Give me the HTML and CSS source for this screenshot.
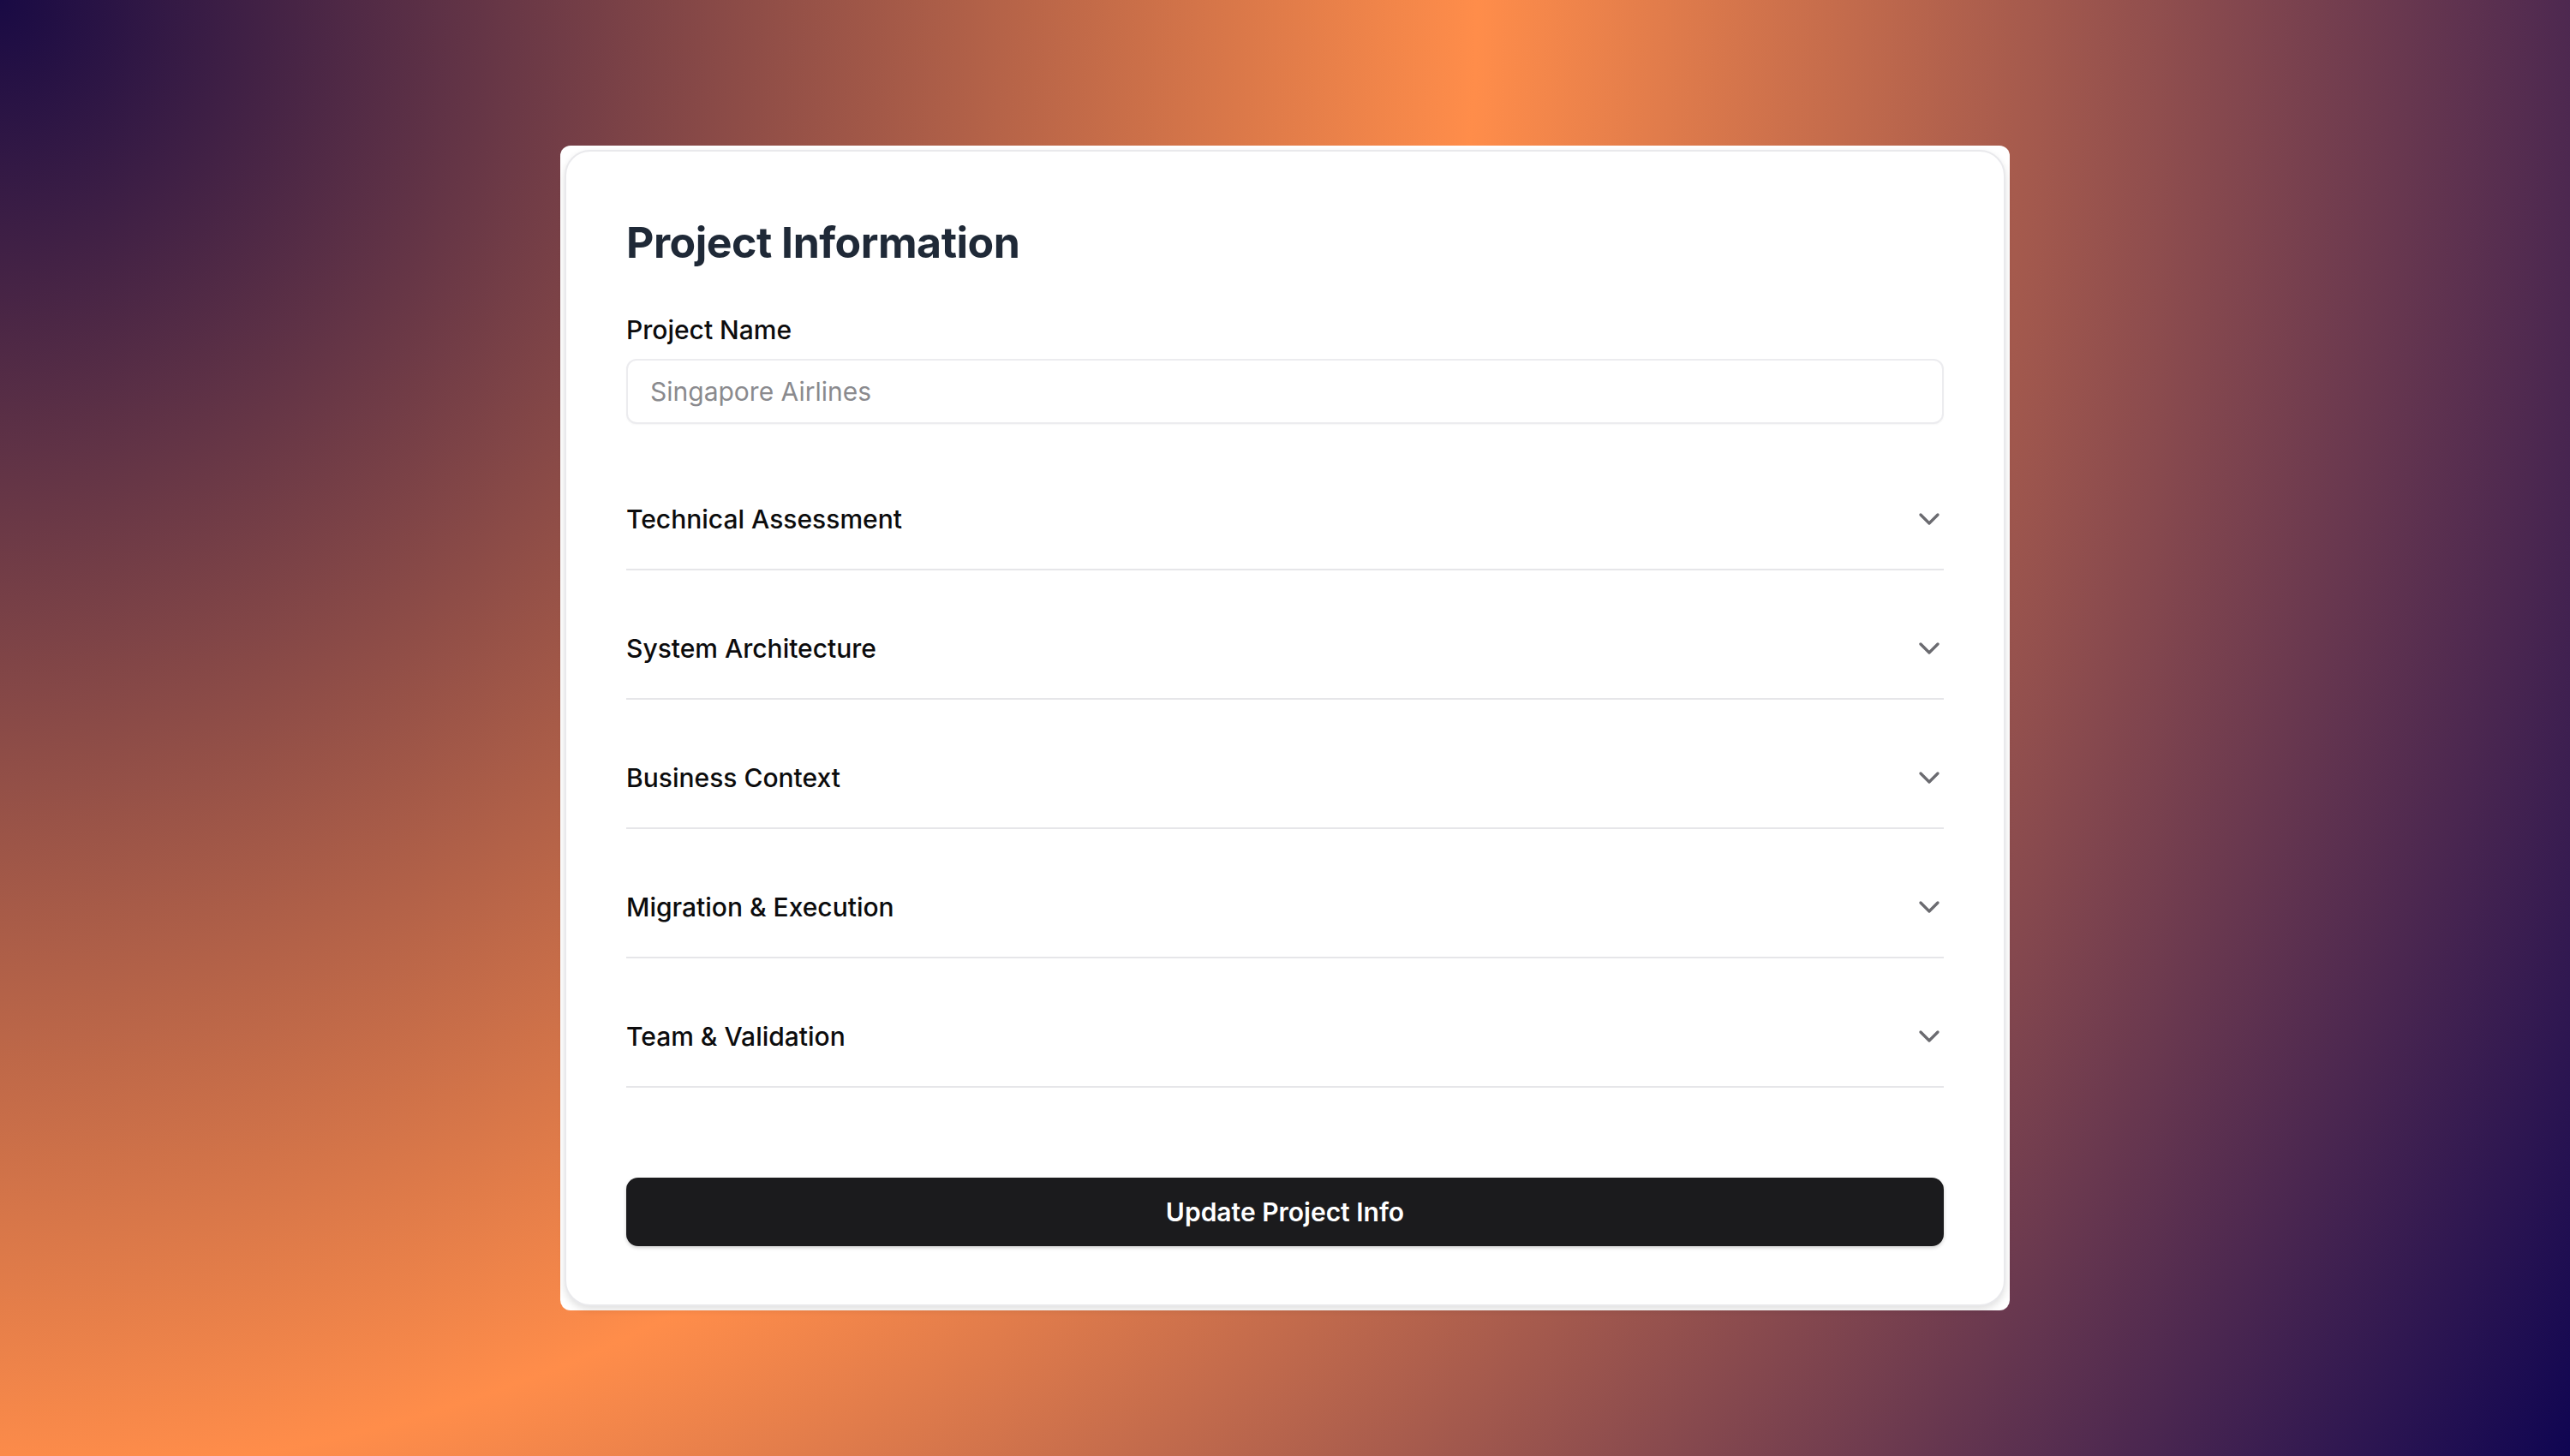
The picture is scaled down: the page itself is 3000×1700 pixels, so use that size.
FILE: index.html
```html
<!DOCTYPE html>
<html lang="en">
<head>
<meta charset="utf-8">
<title>Project Information</title>
<link rel="stylesheet" href="styles.css">
</head>
<body>
<main class="page">
  <div class="frame">
    <section class="card">
      <h1 class="title">Project Information</h1>
      <form class="form">
        <label class="label" for="pname">Project Name</label>
        <input class="input" id="pname" type="text" placeholder="Singapore Airlines">
        <div class="accordion">
          <div class="item"><span class="item-title">Technical Assessment</span><svg class="chev" viewBox="0 0 24 24"><path d="m6 9 6 6 6-6"/></svg></div>
          <div class="item"><span class="item-title">System Architecture</span><svg class="chev" viewBox="0 0 24 24"><path d="m6 9 6 6 6-6"/></svg></div>
          <div class="item"><span class="item-title">Business Context</span><svg class="chev" viewBox="0 0 24 24"><path d="m6 9 6 6 6-6"/></svg></div>
          <div class="item"><span class="item-title">Migration &amp; Execution</span><svg class="chev" viewBox="0 0 24 24"><path d="m6 9 6 6 6-6"/></svg></div>
          <div class="item"><span class="item-title">Team &amp; Validation</span><svg class="chev" viewBox="0 0 24 24"><path d="m6 9 6 6 6-6"/></svg></div>
        </div>
        <button class="button" type="button">Update Project Info</button>
      </form>
    </section>
  </div>
</main>
</body>
</html>
```
FILE: styles.css
```css
* { box-sizing: border-box; }
html, body { margin: 0; padding: 0; }
body {
  width: 3000px;
  height: 1700px;
  font-family: Inter, "Noto Sans", "Liberation Sans", sans-serif;
  background: radial-gradient(circle at top left, #190a44 0%, #ff8d4a 50%, #0f0552 100%);
}
.page {
  width: 3000px;
  height: 1700px;
  display: flex;
  align-items: center;
  justify-content: center;
}
.frame {
  width: 1692px;
  background: #ffffff;
  border-radius: 12px;
  padding: 5px;
}
.card {
  border: 2px solid #e9e9ec;
  border-radius: 30px;
  box-shadow: 0 4px 8px rgba(0, 0, 0, 0.12);
  padding: 76px 70px 68px;
  background: #fff;
}
.title {
  margin: 0;
  font-size: 50px;
  line-height: 60px;
  font-weight: 700;
  color: #1f2937;
  letter-spacing: -0.5px;
}
.form {
  display: flex;
  flex-direction: column;
  margin-top: 52px;
}
.label {
  font-size: 30px;
  line-height: 40px;
  font-weight: 500;
  color: #0c0c0d;
}
.input {
  margin-top: 14px;
  height: 76px;
  border: 2px solid #ececef;
  border-radius: 12px;
  padding: 0 26px;
  font-family: inherit;
  font-size: 30px;
  color: #111;
  background: #fff;
  outline: none;
  box-shadow: 0 1px 2px rgba(0, 0, 0, 0.04);
}
.input::placeholder { color: #8a8a8e; }
.accordion {
  margin-top: 20px;
  display: flex;
  flex-direction: column;
}
.item {
  display: flex;
  align-items: center;
  justify-content: space-between;
  padding: 71px 0 38px;
  border-bottom: 2px solid #e6e6e9;
}
.item-title {
  font-size: 30px;
  line-height: 40px;
  font-weight: 500;
  color: #0c0c0d;
}
.chev {
  width: 40px;
  height: 40px;
  margin-right: -3px;
  fill: none;
  stroke: #6b6b70;
  stroke-width: 2;
  stroke-linecap: round;
  stroke-linejoin: round;
}
.button {
  margin-top: 105px;
  height: 80px;
  border: none;
  border-radius: 14px;
  background: #1b1b1d;
  color: #fff;
  font-family: inherit;
  font-size: 30px;
  font-weight: 600;
  box-shadow: 0 2px 4px rgba(0, 0, 0, 0.18);
}
```
